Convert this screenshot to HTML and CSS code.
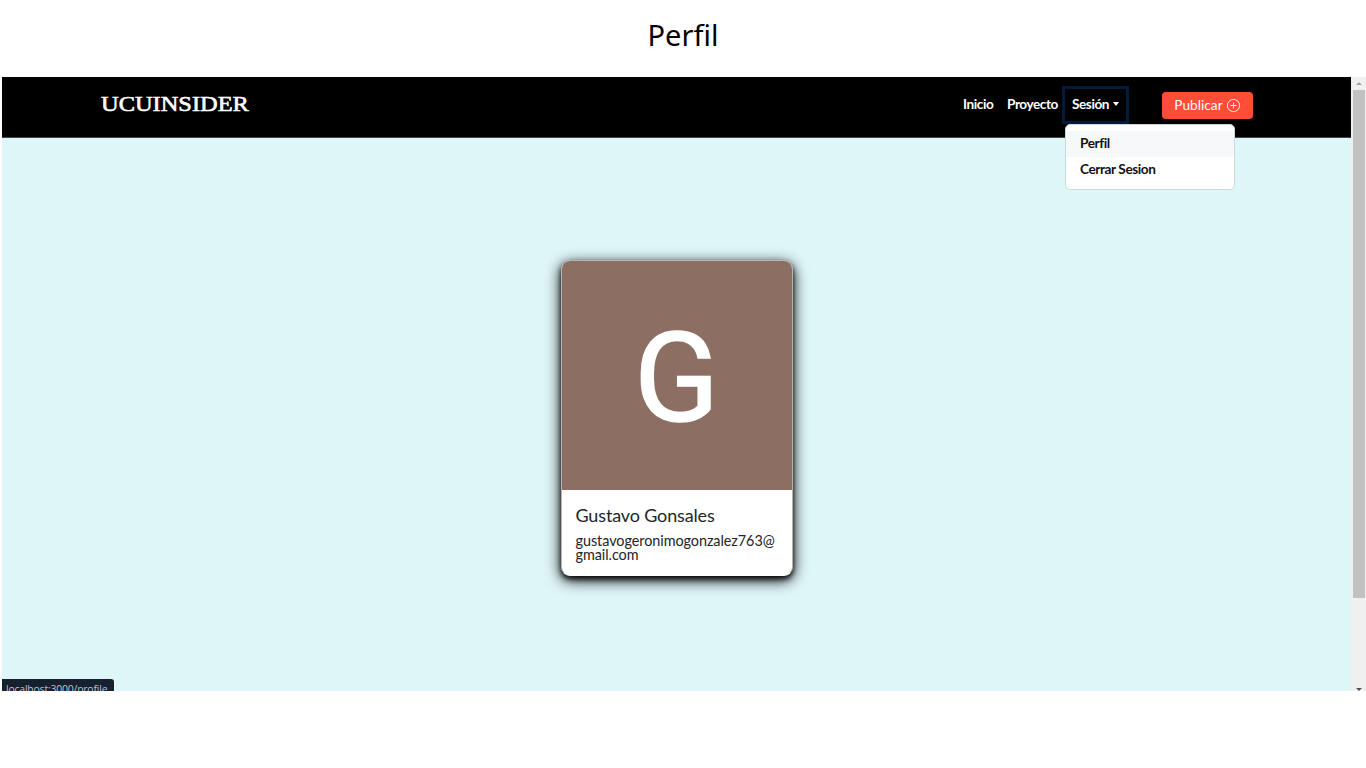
FILE: index.html
```html
<!DOCTYPE html>
<html lang="es">
<head>
<meta charset="utf-8">
<title>Perfil</title>
<link rel="stylesheet" href="styles.css">
</head>
<body>
<h1 class="title">Perfil</h1>
<div class="frame">
  <div class="app">
    <header class="navbar">
      <a class="brand">UCUINSIDER</a>
      <nav class="links">
        <a class="link">Inicio</a>
        <a class="link wide">Proyecto</a>
        <div class="session">
          <a class="link toggle">Sesión<span class="caret"></span></a>
          <div class="menu">
            <a class="item active">Perfil</a>
            <a class="item">Cerrar Sesion</a>
          </div>
        </div>
      </nav>
      <a class="publish"><span class="publish-text">Publicar</span>
        <svg class="plus" viewBox="0 0 16 16" fill="currentColor"><path d="M8 15A7 7 0 1 1 8 1a7 7 0 0 1 0 14m0 1A8 8 0 1 0 8 0a8 8 0 0 0 0 16"/><path d="M8 4a.5.5 0 0 1 .5.5v3h3a.5.5 0 0 1 0 1h-3v3a.5.5 0 0 1-1 0v-3h-3a.5.5 0 0 1 0-1h3v-3A.5.5 0 0 1 8 4"/></svg>
      </a>
    </header>
    <main class="content">
      <article class="card">
        <div class="avatar">G</div>
        <div class="card-body">
          <h2 class="name">Gustavo Gonsales</h2>
          <p class="email">gustavogeronimogonzalez763@<br>gmail.com</p>
        </div>
      </article>
    </main>
    <div class="status">localhost:3000/profile</div>
  </div>
  <div class="scrollbar">
    <span class="arrow up"></span>
    <span class="thumb"></span>
    <span class="arrow down"></span>
  </div>
</div>
</body>
</html>
```
FILE: styles.css
```css
* { box-sizing: border-box; }
body { margin: 0; height: 768px; overflow: hidden; background: #fff; font-family: Lato, sans-serif; }
.title { margin: 0; height: 77px; padding-top: 13px; text-align: center; font: 400 29px/43px "Noto Sans", sans-serif; color: #000; }
.frame { display: flex; height: 614px; margin-left: 2px; overflow: hidden; }
.app { position: relative; width: 1349px; flex: none; background: #dff6f8; overflow: hidden; }
.navbar { display: flex; align-items: flex-start; height: 61px; padding-left: 99px; background: #000; border-bottom: 1px solid #444; color: #fff; }
.brand { width: 148px; flex: none; margin-top: 14px; font: 400 22px/26px "Liberation Serif", serif; -webkit-text-stroke: .6px #fff; transform: scaleX(1.11); transform-origin: 0 0; white-space: nowrap; }
.links { display: flex; align-items: flex-start; margin-left: 707px; padding-top: 12px; }
.link { display: block; width: 44px; height: 32px; padding: 0 7px; font-size: 13.6px; font-weight: 700; line-height: 31px; letter-spacing: -.43px; white-space: nowrap; }
.wide { width: 65px; }
.session { position: relative; }
.toggle { box-shadow: 0 0 0 3px #021a3d; width: 61px; }
.caret { display: inline-block; margin-left: 4px; vertical-align: 3px; border: 3.5px solid transparent; border-top: 4px solid #fff; border-bottom: 0; }
.menu { position: absolute; left: 0; top: 35px; width: 170px; height: 66px; padding: 6px 0; background: #fff; border: 1px solid #ccd9db; border-radius: 5px; z-index: 2; }
.item { display: block; height: 26px; padding-left: 14px; font-size: 13.6px; font-weight: 700; line-height: 25px; letter-spacing: -.4px; color: #111; }
.active { background: #f7f8fa; }
.publish { display: flex; align-items: center; justify-content: center; gap: 4px; width: 91px; height: 27px; margin: 14.5px 0 0 35.5px; border-radius: 4px; background: #ff4d38; font-size: 13.6px; letter-spacing: .05px; }
.plus { width: 13px; height: 13px; }
.content { display: flex; justify-content: center; padding-top: 122px; }
.card { width: 232px; height: 316px; border: 1px solid #b9b3b0; border-bottom-color: #fff; border-radius: 9px; background: #fff; box-shadow: 0 4px 15px 0 #000, 0 3px 5px rgba(0,0,0,.8); overflow: hidden; }
.avatar { height: 229px; background: #8d6e63; color: #fff; text-align: center; font: 400 125px/236px Roboto, sans-serif; -webkit-text-stroke: 1.5px #fff; }
.card-body { padding: 13px 14px; }
.name { margin: 0; font-size: 18px; font-weight: 400; line-height: 24px; letter-spacing: -.15px; color: #212529; }
.email { margin: 7px 0 0; font-size: 14.4px; line-height: 14.4px; letter-spacing: -.05px; color: #212529; white-space: nowrap; }
.status { position: absolute; left: 0; bottom: 0; width: 112px; height: 12px; padding-left: 4px; background: #17202f; border-radius: 0 3px 0 0; color: #b9c3d0; font: 10.4px/20px "Open Sans", sans-serif; letter-spacing: -.18px; white-space: nowrap; overflow: hidden; }
.scrollbar { display: flex; flex-direction: column; align-items: center; flex: 1; background: #f0f0f0; }
.thumb { width: 12px; height: 508px; margin-top: 5px; background: #c1c1c1; }
.arrow { border: 3.5px solid transparent; }
.up { margin-top: 5px; border-top: 0; border-bottom: 3px solid #a3a3a3; }
.down { margin-top: auto; border-bottom: 0; border-top: 3px solid #505050; }
```
